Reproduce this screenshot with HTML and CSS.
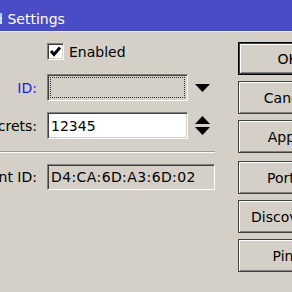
FILE: index.html
```html
<!DOCTYPE html>
<html lang="en">
<head>
    <meta charset="UTF-8">
    <link rel="stylesheet" href="styles.css">
</head>
<body>
    <div class="title"><span class="title-text">Cloud Settings</span></div>
    <div class="main">
        <div class="form">
            <div class="row check-row">
                <span class="label"></span>
                <span class="checkbox">
                    <svg width="15" height="15" viewBox="0 0 15 15"><polyline points="3,7 6,10.5 12,3.5" fill="none" stroke="#000" stroke-width="3"/></svg>
                </span>
                <span class="check-text">Enabled</span>
            </div>
            <div class="row">
                <span class="label id-label">ID:</span>
                <span class="field combo"><span class="dots"></span></span>
                <svg class="arrow" width="15" height="8" viewBox="0 0 15 8"><path d="M0 0H15L7.5 8Z"/></svg>
            </div>
            <div class="row">
                <span class="label">Secrets:</span>
                <span class="field edit">12345</span>
                <svg class="arrow" width="15" height="19" viewBox="0 0 15 19"><path d="M7.5 0L15 8H0Z M0 11H15L7.5 19Z"/></svg>
            </div>
            <div class="sep"></div>
            <div class="row">
                <span class="label">Client ID:</span>
                <span class="field readonly">D4:CA:6D:A3:6D:02</span>
            </div>
        </div>
        <div class="buttons">
            <div class="btn default">OK</div>
            <div class="btn">Cancel</div>
            <div class="btn">Apply</div>
            <div class="btn gap">Port...</div>
            <div class="btn">Discover...</div>
            <div class="btn">Ping</div>
        </div>
    </div>
</body>
</html>
```
FILE: styles.css
```css
body{
    margin: 0;
    width: 292px;
    height: 292px;
    overflow: hidden;
    background: #d4d0c8;
    font-family: "DejaVu Sans", sans-serif;
    font-size: 14px;
    color: #000;
}
.title{
    height: 32px;
    box-sizing: border-box;
    padding-top: 11px;
    background: #4a4cc6;
    color: #fff;
    border-bottom: 1px solid #e8e6f0;
    white-space: nowrap;
    overflow: hidden;
    line-height: 16px;
}
.title-text{
    margin-left: -37px;
}
.main{
    display: flex;
    padding-top: 10px;
}
.form{
    width: 215px;
    flex-shrink: 0;
}
.row{
    display: flex;
    align-items: center;
    margin-top: 11px;
}
.check-row{
    margin-top: 1px;
}
.check-row + .row{
    margin-top: 14px;
}
.label{
    width: 37px;
    margin-right: 10px;
    display: flex;
    justify-content: flex-end;
    white-space: nowrap;
}
.id-label{
    color: #1c1ce6;
}
.checkbox{
    width: 17px;
    height: 17px;
    box-sizing: border-box;
    background: #fff;
    border: 1px solid;
    border-color: #808080 #fff #fff #808080;
    box-shadow: inset 1px 1px #404040, inset -1px -1px #d4d0c8;
}
.checkbox svg{
    display: block;
}
.check-text{
    margin-left: 5px;
}
.field{
    height: 27px;
    box-sizing: border-box;
    border: 1px solid;
    border-color: #808080 #fff #fff #808080;
    box-shadow: inset 1px 1px #404040, inset -1px -1px #d4d0c8;
    display: flex;
    align-items: center;
    padding-left: 3px;
    white-space: nowrap;
}
.combo{
    width: 141px;
    padding: 2px;
}
.dots{
    align-self: stretch;
    flex: 1;
    border: 1px dotted #303030;
}
.edit{
    width: 141px;
    background: #fff;
}
.readonly{
    width: 168px;
    height: 26px;
    letter-spacing: 0.4px;
}
.arrow{
    margin-left: 7px;
}
.sep{
    margin-top: 12px;
    border-top: 1px solid #9c9a94;
    border-bottom: 1px solid #fff;
}
.buttons{
    margin-left: 23px;
    flex-shrink: 0;
}
.btn{
    width: 99px;
    height: 33px;
    box-sizing: border-box;
    margin-bottom: 6px;
    border: 1px solid #404040;
    box-shadow: inset 1px 1px #fff, inset -1px -1px #808080;
    display: flex;
    align-items: center;
    justify-content: center;
    white-space: nowrap;
}
.default{
    border-color: #000;
    box-shadow: inset 0 0 0 1px #404040, inset 2px 2px #fff, inset -2px -2px #808080;
}
.gap{
    margin-top: 8px;
}
```
